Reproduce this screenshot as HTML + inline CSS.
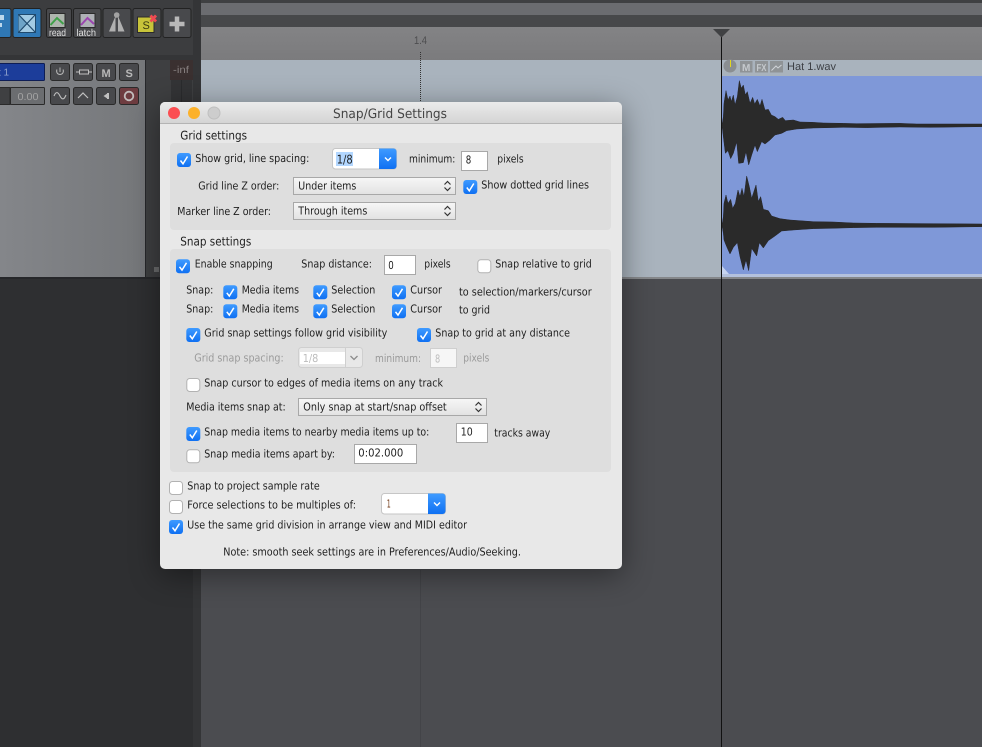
<!DOCTYPE html>
<html lang="en"><head><meta charset="utf-8"><title>Snap/Grid Settings</title>
<style>
html,body{margin:0;padding:0;background:#4b4c50}
#root{position:relative;width:982px;height:747px;overflow:hidden;background:#4b4c50}
.a{position:absolute}
svg{position:absolute;left:0;top:0}
svg text{font-family:"DejaVu Sans",sans-serif;font-size:11px;fill:#1e1e1e;text-rendering:geometricPrecision}
.h{font-size:12px}
.d{fill:#9a9a9a}
.l{fill:#bdbdbd}
.soft{filter:blur(.25px)}
</style></head><body><div id="root">
<div class="a" style="left:0;top:0;width:194px;height:55px;background:#3c3d3f"></div>
<div class="a" style="left:0;top:55px;width:194px;height:5px;background:#343537"></div>
<div class="a" style="left:0;top:60px;width:145px;height:218px;background:linear-gradient(90deg,#84868a,#75777a)"></div>
<div class="a" style="left:145px;top:60px;width:48px;height:218px;background:#3e3f41;border-left:1px solid #26272a;box-sizing:border-box"></div>
<div class="a" style="left:0;top:277px;width:194px;height:2px;background:#26272a"></div>
<div class="a" style="left:0;top:279px;width:194px;height:468px;background:#2e2f31"></div>
<div class="a" style="left:193px;top:0;width:8px;height:747px;background:#343537"></div>
<div class="a" style="left:201px;top:0;width:781px;height:3px;background:#3f4042"></div>
<div class="a" style="left:201px;top:3px;width:781px;height:12px;background:#6b6c70"></div>
<div class="a" style="left:201px;top:15px;width:781px;height:12px;background:#47484a"></div>
<div class="a" style="left:201px;top:27px;width:781px;height:33px;background:linear-gradient(180deg,#838385,#7b7b7d)"></div>
<div class="a" style="left:201px;top:60px;width:781px;height:218px;background:#a9b3bd"></div>
<div class="a" style="left:722px;top:76px;width:260px;height:198px;background:#7f98d8"></div>
<div class="a" style="left:722px;top:274px;width:260px;height:3px;background:#b4c1dd"></div>
<div class="a" style="left:201px;top:277px;width:781px;height:2px;background:#85878a"></div>

<svg width="982" height="747" viewBox="0 0 982 747" class="soft">
<!-- toolbar -->
<rect x="-6" y="8.500" width="17" height="29" rx="2" fill="#2f78b5" stroke="#222"/>
<rect x="0" y="15" width="4" height="5" fill="#bcd8ec"/><rect x="0" y="23" width="2" height="4" fill="#bcd8ec"/>
<rect x="13" y="8.500" width="28" height="29" rx="2" fill="#2f78b5" stroke="#222"/>
<rect x="18.500" y="14.500" width="17" height="18" fill="#a2cbe4" stroke="#1f4a6e"/>
<path d="M18.500 14.500 27 23.500 18.500 32.500Z" fill="#6ea4c8"/>
<path d="M18.500 14.500 35.500 32.500M35.500 14.500 18.500 32.500" stroke="#1f4a6e" stroke-width="1.200"/>
<rect x="46.500" y="8.500" width="25" height="29" rx="2" fill="#48494c" stroke="#222"/>
<rect x="49.500" y="13.500" width="15.500" height="14" fill="#aeb5ae" stroke="#2b2b2b"/>
<path d="M50.500 25 57 18 63.500 24" fill="none" stroke="#3fa049" stroke-width="2"/>
<text x="49" y="36" textLength="17" lengthAdjust="spacingAndGlyphs" style="font-size:10px;fill:#e2e2e2;font-family:'Liberation Sans'">read</text>
<rect x="73.500" y="8.500" width="27.500" height="29" rx="2" fill="#48494c" stroke="#222"/>
<rect x="80" y="13.500" width="15" height="14" fill="#aeb0b6" stroke="#2b2b2b"/>
<path d="M81 25 87.500 18 94 24" fill="none" stroke="#9b45b0" stroke-width="2"/>
<text x="76.500" y="36" textLength="19.500" lengthAdjust="spacingAndGlyphs" style="font-size:10px;fill:#e2e2e2;font-family:'Liberation Sans'">latch</text>
<rect x="103" y="8.500" width="28" height="29" rx="2" fill="#48494c" stroke="#222"/>
<circle cx="116.700" cy="15" r="2.800" fill="#a2a2a2"/>
<path d="M115.500 16 115.500 31.500 109 31.500ZM118 16 124.500 31.500 118 31.500Z" fill="#b0b0b0"/>
<rect x="133" y="8.500" width="28" height="29" rx="2" fill="#48494c" stroke="#222"/>
<rect x="137.500" y="17" width="16.500" height="15.500" fill="#c8c43a" stroke="#2b2b2b"/>
<text x="142.500" y="29" style="font-size:11px;fill:#3a3a10;font-family:'Liberation Sans'">S</text>
<path d="M150.500 15.500 156 21.500M156 15.500 150.500 21.500" stroke="#ee4a52" stroke-width="2.800"/>
<rect x="163" y="8.500" width="28" height="29" rx="2" fill="#48494c" stroke="#222"/>
<path d="M169.500 24H184.500M177 16.500V31.500" stroke="#b8b8b8" stroke-width="4.500"/>
<!-- mixer panel -->
<rect x="-3" y="63.500" width="47.500" height="17" rx="1" fill="#1c3d9a" stroke="#0e1d55"/>
<text x="-2" y="75.500" style="font-size:10px;fill:#8ea0cc;font-family:'Liberation Sans'">t 1</text>
<g fill="#48494c" stroke="#2a2a2a">
<rect x="50.500" y="63.500" width="19" height="17" rx="2"/><rect x="73.500" y="63.500" width="19" height="17" rx="2"/>
<rect x="96.500" y="63.500" width="19" height="17" rx="2"/><rect x="119.500" y="63.500" width="19" height="17" rx="2"/>
<rect x="50.500" y="87.500" width="19" height="17" rx="2"/><rect x="73.500" y="87.500" width="19" height="17" rx="2"/>
<rect x="96.500" y="87.500" width="19" height="17" rx="2"/>
<rect x="-3" y="87.500" width="13" height="17" fill="#3f4042"/>
<rect x="10.500" y="87.500" width="34" height="17" rx="1" fill="#6b6d70"/>
</g>
<rect x="119.500" y="87.500" width="19" height="17" rx="2" fill="#6e3c40" stroke="#2a2a2a"/>
<circle cx="129" cy="96" r="4.300" fill="none" stroke="#c2bcbc" stroke-width="1.800"/>
<text x="17.500" y="100" textLength="21" lengthAdjust="spacingAndGlyphs" style="font-size:10px;fill:#a2a2a2;font-family:'Liberation Sans'">0.00</text>
<path d="M57 69.500A3.400 3.400 0 1 0 63 69.500M60 67.500V72" fill="none" stroke="#b5b5b5"/>
<path d="M76 72H79M89 72H92" stroke="#c0c0c0"/><rect x="79.500" y="70" width="9" height="4" fill="none" stroke="#c0c0c0"/>
<text x="101.500" y="77" style="font-size:11px;font-weight:bold;fill:#b8b8b8;font-family:'Liberation Sans'">M</text>
<text x="125.500" y="77" style="font-size:11px;font-weight:bold;fill:#b8b8b8;font-family:'Liberation Sans'">S</text>
<path d="M54 96C56 91 58 92 60 96S64 100 66 95" fill="none" stroke="#c0c0c0" stroke-width="1.100"/>
<path d="M78 98 83 93 88 98" fill="none" stroke="#c0c0c0" stroke-width="1.200"/>
<path d="M103.500 96 108 93V99Z" fill="#c0c0c0"/><rect x="107" y="93" width="2" height="6" fill="#c0c0c0"/>
<!-- meter -->
<rect x="170" y="60" width="23" height="20" fill="#3a3030"/>
<rect x="171" y="80" width="21" height="198" fill="#333436"/>
<path d="M181.500 80V278" stroke="#2a2b2d"/>
<text x="173" y="73" textLength="16" lengthAdjust="spacingAndGlyphs" style="font-size:10px;fill:#857e7e;font-family:'Liberation Sans'">-inf</text>
<rect x="154" y="267" width="5" height="5" fill="#6a6b6d"/>
<!-- ruler -->
<text x="414" y="44" textLength="13" lengthAdjust="spacingAndGlyphs" style="font-size:11px;fill:#4d4d4f;font-family:'Liberation Sans'">1.4</text>
<path d="M420.500 52V102" stroke="#333" stroke-dasharray="1 1"/>
<path d="M420.500 570V747" stroke="#434448"/>
<!-- media item -->
<circle cx="730" cy="66" r="6.500" fill="#8a8e92"/>
<path d="M730.500 60V67" stroke="#e2d820"/>
<rect x="740" y="61" width="12.500" height="11.500" fill="#8f9396"/>
<text x="742" y="71" style="font-size:10px;font-weight:bold;fill:#c5c9cd;font-family:'Liberation Sans'">M</text>
<rect x="755" y="61" width="13" height="11.500" fill="#8f9396"/>
<text x="756.500" y="71" textLength="10" lengthAdjust="spacingAndGlyphs" style="font-size:10px;font-weight:bold;fill:#c5c9cd;font-family:'Liberation Sans'">FX</text>
<rect x="770" y="61" width="13" height="11.500" fill="#8f9396"/>
<path d="M771.500 70.500 776 66 778 68 781.500 65" fill="none" stroke="#d0d4d8"/>
<text x="787" y="70" textLength="49" lengthAdjust="spacingAndGlyphs" style="font-size:11px;fill:#3c3f44;font-family:'Liberation Sans'">Hat 1.wav</text>
<path d="M722 274V266L729 274Z" fill="#c7d4f0"/>
<g transform="translate(700 20) scale(.33333)" fill="#2a2a2a" stroke="#252528" stroke-width="1.500">
<path d="M66 316 70 290 72 250 78 212 84 240 90 228 94 245 100 225 105 255 112 230 118 182 124 205 130 195 136 225 142 215 150 250 158 232 164 252 172 238 180 258 186 238 195 270 205 268 214 285 225 290 235 298 248 292 256 302 280 300 300 306 340 307 370 309 430 310 470 311 600 310 650 312 846 312V320L690 322 600 321 500 323 430 322 340 324 290 327 260 332 245 340 225 345 210 360 195 372 185 365 172 395 165 375 155 405 146 435 138 395 130 428 116 430 110 365 100 400 92 416 84 392 76 400 70 350Z"/>
<path d="M66 616 70 590 72 550 78 525 84 550 92 538 98 565 106 550 114 510 120 530 126 505 132 530 140 468 148 500 155 535 160 520 168 495 175 545 182 530 190 568 205 572 215 588 240 596 270 600 340 605 400 606 460 609 530 610 700 611 846 612V620L700 622 530 622 460 623 390 625 340 626 280 630 245 633 225 648 205 662 190 684 178 668 170 708 155 685 146 752 138 720 130 750 120 710 112 668 100 682 90 702 80 680 72 660 70 640Z"/>
</g>
<!-- playhead -->
<path d="M721.500 36V747" stroke="#111"/>
<path d="M713 29H730L721.500 37.500Z" fill="#404143"/>
</svg>

<!-- dialog -->
<div class="a" style="left:160px;top:102px;width:462px;height:467px;border-radius:5px;background:#e8e8e8;box-shadow:0 6px 30px rgba(0,0,0,.42)"></div>
<div class="a" style="left:160px;top:102px;width:462px;height:21px;border-radius:5px 5px 0 0;background:linear-gradient(180deg,#ebebeb,#d4d4d4);border-bottom:1px solid #b4b4b4;box-sizing:content-box"></div>
<div class="a" style="left:170px;top:143px;width:441px;height:87px;background:#dedede;border-radius:4px"></div>
<div class="a" style="left:170px;top:249px;width:441px;height:223px;background:#dedede;border-radius:4px"></div>

<svg width="982" height="747" viewBox="0 0 982 747" class="soft">
<defs>
<linearGradient id="b" x1="0" y1="0" x2="0" y2="1"><stop offset="0" stop-color="#3f9bff"/><stop offset="1" stop-color="#0f70f2"/></linearGradient>
<linearGradient id="s" x1="0" y1="0" x2="0" y2="1"><stop offset="0" stop-color="#f6f6f6"/><stop offset="1" stop-color="#e2e2e2"/></linearGradient>
<g id="c"><rect width="14" height="14" rx="3" fill="url(#b)"/><path d="M3.500 7.500 6 10.800 10.500 3.500" fill="none" stroke="#fff" stroke-width="1.500"/></g>
<g id="u"><rect x=".5" y=".5" width="13" height="13" rx="3" fill="#fff" stroke="#b2b2b2"/></g>
<g id="a"><path d="M-3 -1.500 0 -4.500 3 -1.500M-3 1.500 0 4.500 3 1.500" fill="none" stroke="#333" stroke-width="1.200"/></g>
<path id="v" d="M-3 -1.500 0 1.500 3 -1.500" fill="none" stroke="#fff" stroke-width="1.400"/>
</defs>
<circle cx="174" cy="113" r="6" fill="#fb4e52"/><circle cx="194" cy="113" r="6" fill="#fcb12a"/><circle cx="214" cy="113" r="6" fill="#cdcdcd" stroke="#bfbfbf"/>
<text x="333" y="118" textLength="114" lengthAdjust="spacingAndGlyphs" style="font-size:13px;fill:#444">Snap/Grid Settings</text>

<text class="h" x="180.300" y="139.500" textLength="66.700" lengthAdjust="spacingAndGlyphs">Grid settings</text>
<use href="#c" x="177" y="153"/>
<text x="195.300" y="162" textLength="114" lengthAdjust="spacingAndGlyphs">Show grid, line spacing:</text>
<rect x="332.500" y="148.500" width="64" height="20.500" rx="3" fill="#fff" stroke="#c6c6c6"/>
<path d="M379 148.500H393.500a3 3 0 0 1 3 3V166a3 3 0 0 1-3 3H379Z" fill="url(#b)"/>
<use href="#v" x="388" y="159"/>
<rect x="336" y="152" width="17" height="14" fill="#b3d7ff"/>
<text x="336.700" y="163.300" textLength="16" lengthAdjust="spacingAndGlyphs" style="font-size:12px">1/8</text>
<text x="409" y="162.700" textLength="46.300" lengthAdjust="spacingAndGlyphs">minimum:</text>
<rect x="461.500" y="151.500" width="26" height="19" fill="#fff" stroke="#a8a8a8"/>
<text x="465.700" y="163.700" textLength="5.500" lengthAdjust="spacingAndGlyphs">8</text>
<text x="497.300" y="162.700" textLength="26.400" lengthAdjust="spacingAndGlyphs">pixels</text>
<text x="198.300" y="189.500" textLength="81" lengthAdjust="spacingAndGlyphs">Grid line Z order:</text>
<rect x="293.500" y="177.500" width="162" height="17" fill="url(#s)" stroke="#a8a8a8"/>
<text x="298.300" y="189.700" textLength="58" lengthAdjust="spacingAndGlyphs">Under items</text>
<use href="#a" x="447.500" y="186"/>
<use href="#c" x="463.300" y="180"/>
<text x="481.300" y="188.700" textLength="107.700" lengthAdjust="spacingAndGlyphs">Show dotted grid lines</text>
<text x="177.300" y="215" textLength="93.700" lengthAdjust="spacingAndGlyphs">Marker line Z order:</text>
<rect x="293.500" y="202.500" width="162" height="17" fill="url(#s)" stroke="#a8a8a8"/>
<text x="298.300" y="214.700" textLength="69" lengthAdjust="spacingAndGlyphs">Through items</text>
<use href="#a" x="447.500" y="211"/>

<text class="h" x="180.300" y="245.500" textLength="71" lengthAdjust="spacingAndGlyphs">Snap settings</text>
<use href="#c" x="176" y="259.300"/>
<text x="194.700" y="267.700" textLength="78" lengthAdjust="spacingAndGlyphs">Enable snapping</text>
<text x="301.300" y="267.700" textLength="70.700" lengthAdjust="spacingAndGlyphs">Snap distance:</text>
<rect x="384.500" y="255.500" width="31" height="19" fill="#fff" stroke="#a8a8a8"/>
<text x="388.300" y="269" textLength="5.500" lengthAdjust="spacingAndGlyphs">0</text>
<text x="424.300" y="267.700" textLength="26.400" lengthAdjust="spacingAndGlyphs">pixels</text>
<use href="#u" x="477.300" y="259.300"/>
<text x="495.300" y="267.700" textLength="96.400" lengthAdjust="spacingAndGlyphs">Snap relative to grid</text>

<text x="186.300" y="293.700" textLength="27" lengthAdjust="spacingAndGlyphs">Snap:</text>
<use href="#c" x="223.300" y="285.300"/>
<text x="241.700" y="293.300" textLength="57.300" lengthAdjust="spacingAndGlyphs">Media items</text>
<use href="#c" x="313.300" y="285.300"/>
<text x="331.300" y="293.300" textLength="44" lengthAdjust="spacingAndGlyphs">Selection</text>
<use href="#c" x="392" y="285.300"/>
<text x="410.300" y="293.700" textLength="31.700" lengthAdjust="spacingAndGlyphs">Cursor</text>
<text x="459" y="295.700" textLength="132.700" lengthAdjust="spacingAndGlyphs">to selection/markers/cursor</text>

<text x="186.300" y="312.700" textLength="27" lengthAdjust="spacingAndGlyphs">Snap:</text>
<use href="#c" x="223.300" y="304.300"/>
<text x="241.700" y="312.300" textLength="57.300" lengthAdjust="spacingAndGlyphs">Media items</text>
<use href="#c" x="313.300" y="304.300"/>
<text x="331.300" y="312.300" textLength="44" lengthAdjust="spacingAndGlyphs">Selection</text>
<use href="#c" x="392" y="304.300"/>
<text x="410.300" y="312.700" textLength="31.700" lengthAdjust="spacingAndGlyphs">Cursor</text>
<text x="459" y="313.700" textLength="31" lengthAdjust="spacingAndGlyphs">to grid</text>

<use href="#c" x="186.300" y="328"/>
<text x="204.300" y="336.700" textLength="183" lengthAdjust="spacingAndGlyphs">Grid snap settings follow grid visibility</text>
<use href="#c" x="417" y="328"/>
<text x="435.300" y="336.700" textLength="134.700" lengthAdjust="spacingAndGlyphs">Snap to grid at any distance</text>

<text class="d" x="194.300" y="361.700" textLength="89.400" lengthAdjust="spacingAndGlyphs">Grid snap spacing:</text>
<rect x="298.500" y="347.500" width="64" height="20" rx="3" fill="#e8e8e8" stroke="#cfcfcf"/>
<rect x="300" y="352" width="45" height="12" fill="#fff"/>
<path d="M345.500 348V367" stroke="#cfcfcf"/>
<path d="M350.500 356 354 359.500 357.500 356" fill="none" stroke="#8c8c8c" stroke-width="1.300"/>
<text class="l" x="302.700" y="362" textLength="15.600" lengthAdjust="spacingAndGlyphs">1/8</text>
<text class="d" x="375" y="362" textLength="46" lengthAdjust="spacingAndGlyphs">minimum:</text>
<rect x="430.500" y="348.500" width="26" height="19" fill="#f6f6f6" stroke="#cfcfcf"/>
<text class="l" x="435" y="362.700" textLength="5.200" lengthAdjust="spacingAndGlyphs">8</text>
<text class="d" x="463.300" y="361.700" textLength="26" lengthAdjust="spacingAndGlyphs">pixels</text>

<use href="#u" x="186.300" y="378"/>
<text x="204.300" y="386.700" textLength="238.700" lengthAdjust="spacingAndGlyphs">Snap cursor to edges of media items on any track</text>
<text x="186.300" y="410.700" textLength="99.400" lengthAdjust="spacingAndGlyphs">Media items snap at:</text>
<rect x="298.500" y="398.500" width="188" height="17" fill="url(#s)" stroke="#a8a8a8"/>
<text x="303.300" y="410.700" textLength="143.400" lengthAdjust="spacingAndGlyphs">Only snap at start/snap offset</text>
<use href="#a" x="478.500" y="407"/>
<use href="#c" x="186.300" y="427"/>
<text x="204.300" y="435.300" textLength="225" lengthAdjust="spacingAndGlyphs">Snap media items to nearby media items up to:</text>
<rect x="456.500" y="423.500" width="31" height="19" fill="#fff" stroke="#a8a8a8"/>
<text x="460.700" y="435.700" textLength="12" lengthAdjust="spacingAndGlyphs">10</text>
<text x="494.300" y="436.700" textLength="56" lengthAdjust="spacingAndGlyphs">tracks away</text>
<use href="#u" x="186.300" y="449.300"/>
<text x="204.300" y="457.300" textLength="130.700" lengthAdjust="spacingAndGlyphs">Snap media items apart by:</text>
<rect x="354.500" y="444.500" width="62" height="19" fill="#fff" stroke="#a8a8a8"/>
<text x="358.300" y="456.700" textLength="45" lengthAdjust="spacingAndGlyphs">0:02.000</text>

<use href="#u" x="169" y="481"/>
<text x="187.300" y="489.300" textLength="132.400" lengthAdjust="spacingAndGlyphs">Snap to project sample rate</text>
<use href="#u" x="169" y="500"/>
<text x="187.300" y="508.300" textLength="168.700" lengthAdjust="spacingAndGlyphs">Force selections to be multiples of:</text>
<rect x="381.500" y="493.500" width="64" height="20.500" rx="3" fill="#fff" stroke="#c6c6c6"/>
<path d="M428 493.500H442.500a3 3 0 0 1 3 3V511a3 3 0 0 1-3 3H428Z" fill="url(#b)"/>
<use href="#v" x="437" y="504"/>
<text x="386.700" y="507.700" textLength="4" lengthAdjust="spacingAndGlyphs" style="fill:#6e3510">1</text>
<use href="#c" x="169" y="520"/>
<text x="187.300" y="528.300" textLength="279.700" lengthAdjust="spacingAndGlyphs">Use the same grid division in arrange view and MIDI editor</text>
<text x="223.300" y="555.700" textLength="297.700" lengthAdjust="spacingAndGlyphs">Note: smooth seek settings are in Preferences/Audio/Seeking.</text>
</svg>
</div></body></html>
